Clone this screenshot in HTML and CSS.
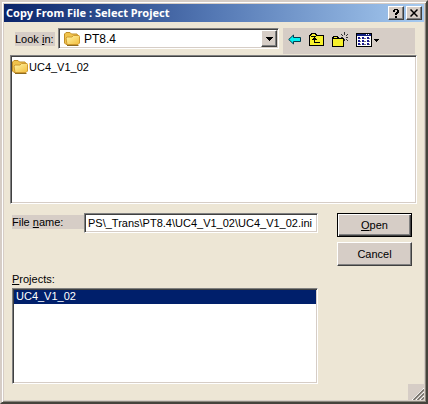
FILE: index.html
```html
<!DOCTYPE html>
<html lang="en">
<head>
<meta charset="utf-8">
<title>Copy From File : Select Project</title>
<link rel="stylesheet" href="styles.css">
</head>
<body>
<svg class="defs" width="0" height="0" aria-hidden="true">
  <defs>
    <linearGradient id="gold" x1="0" y1="0" x2="1" y2="1">
      <stop offset="0" stop-color="#fff6a8"/>
      <stop offset="1" stop-color="#f3bd3c"/>
    </linearGradient>
    <symbol id="folder" viewBox="0 0 16 14">
      <path d="M.5 11V2L2 .5h4L7.500 2H13l.5 1v8l-1 1.500H2z" fill="#f0c34c" stroke="#c08e28"/>
      <path d="M3 12.500L2 6l1-1h5l1.500-1.500H15l.5 1V11L14 12.500z" fill="url(#gold)" stroke="#cf9a30"/>
      <path d="M3 13.500h11.500" stroke="#8c6a20"/>
    </symbol>
  </defs>
</svg>
<form class="window" onsubmit="return false">
  <header class="titlebar">
    <h1 class="title">Copy From File : Select Project</h1>
    <button class="caption-button" type="button" aria-label="Help">
      <svg width="7" height="9" viewBox="0 0 7 9" shape-rendering="crispEdges"><path d="M1 0h4v1h1v3H5v1H4v1H2V4h1V3h1V1H2v2H0V1h1zM2 7h2v2H2z"/></svg>
    </button>
    <button class="caption-button close" type="button" aria-label="Close">
      <svg width="8" height="8" viewBox="0 0 8 8"><path d="M0.500 0.500l7 7M7.500 0.500l-7 7" stroke="#000" stroke-width="1.500"/></svg>
    </button>
  </header>
  <main class="content">
    <div class="look-row">
      <label class="label look-label" for="look">Look <u>i</u>n:</label>
      <div class="combo">
        <select id="look"><option>PT8.4</option></select>
        <svg class="combo-icon" width="16" height="14"><use href="#folder"/></svg>
        <span class="combo-arrow"><svg width="7" height="4" viewBox="0 0 7 4" shape-rendering="crispEdges"><path d="M0 0h7v1H6v1H5v1H4v1H3V3H2V2H1V1H0z"/></svg></span>
      </div>
      <div class="toolbar">
        <button class="tool" type="button" aria-label="Back">
          <svg width="13" height="11" viewBox="0 0 13 11"><path d="M.7 5.500L5.500 1v2.500h7v4h-7V10z" fill="#00f0f0" stroke="#003c50"/></svg>
        </button>
        <button class="tool" type="button" aria-label="Up one level">
          <svg width="15" height="13" viewBox="0 0 15 13" shape-rendering="crispEdges"><path d="M.5 12.500V2.500h1v-1h1v-1h4v1h1v1h7v10z" fill="#f7f12c" stroke="#000"/><path d="M2 3h5" stroke="#000"/><path d="M5 4h1v1h1v1h1v1H6v2h5v1H5V7H3V6h1V5h1z"/></svg>
        </button>
        <button class="tool" type="button" aria-label="New folder">
          <svg width="16" height="15" viewBox="0 0 16 15" shape-rendering="crispEdges"><path d="M.5 14.500v-9h1v-1h4v1h1v1h5v8z" fill="#f7f12c" stroke="#000"/><path d="M1 6.500h6" stroke="#000"/><path d="M12 0h1v3h-1zM12 7h1v2h-1zM9 5h2v1H9zM14 5h2v1h-2zM9 2h1v1H9zM10 3h1v1h-1zM14 3h1v1h-1zM15 2h1v1h-1zM14 7h1v1h-1zM15 8h1v1h-1z" fill="#333"/></svg>
        </button>
        <button class="tool" type="button" aria-label="View menu">
          <svg width="24" height="14" viewBox="0 0 24 14" shape-rendering="crispEdges"><path d="M.5.5h15v13H.5z" fill="#fff" stroke="#000"/><path d="M1 1h14v2H1z" fill="#102080"/><path d="M10 1h1v1h-1zM12 1h1v1h-1z" fill="#fff"/><path d="M2 4h2v2H2zM6 4h2v2H6zM11 4h2v2h-2zM2 7h2v2H2zM6 7h2v2H6zM11 7h2v2h-2zM2 10h2v2H2zM6 10h2v2H6zM11 10h2v2h-2z" fill="#1c1c90"/><path d="M4 5h1v1H4zM8 5h2v1H8zM13 5h1v1h-1zM4 8h1v1H4zM8 8h2v1H8zM13 8h1v1h-1zM4 11h1v1H4zM8 11h2v1H8zM13 11h1v1h-1z" fill="#777"/><path d="M18 6h5v1h-1v1h-1v1h-1V8h-1V7h-1z"/></svg>
        </button>
      </div>
    </div>
    <ul class="files">
      <li class="file"><svg width="16" height="14" aria-hidden="true"><use href="#folder"/></svg><span>UC4_V1_02</span></li>
    </ul>
    <div class="lower">
      <div class="fields">
        <div class="name-row">
          <label class="label name-label" for="name">File <u>n</u>ame:</label>
          <input id="name" class="name-input" type="text" value="PS\_Trans\PT8.4\UC4_V1_02\UC4_V1_02.ini">
        </div>
        <label class="projects-label" for="projects"><u>P</u>rojects:</label>
        <select id="projects" class="projects" size="5"><option selected>UC4_V1_02</option></select>
      </div>
      <div class="actions">
        <button class="action default" type="submit"><span><u>O</u>pen</span></button>
        <button class="action" type="button"><span>Cancel</span></button>
      </div>
    </div>
  </main>
  <svg class="grip" width="16" height="16" viewBox="0 0 16 16" aria-hidden="true"><path d="M4 16L16 4M8 16l8-8M12 16l4-4" stroke="#fff"/><path d="M5.500 16L16 5.500M9.500 16l6.500-6.500M13.500 16l2.500-2.500" stroke="#77736c" stroke-width="1.600"/></svg>
</form>
</body>
</html>
```
FILE: styles.css
```css
* {
  box-sizing: border-box;
}

body {
  margin: 0;
  font: 11px/14px "Liberation Sans", Arial, sans-serif;
  color: #000;
}

button,
input,
select {
  font: inherit;
  color: inherit;
  border-radius: 0;
  margin: 0;
}

button:focus,
input:focus,
select:focus {
  outline: none;
}

.defs {
  position: absolute;
}

.window {
  position: relative;
  min-height: 100vh;
  padding: 2px;
  background: #ede6d5;
  border: 2px solid;
  border-color: #d6cdc6 #45433c #45433c #d6cdc6;
  box-shadow: inset 1px 1px #fff, inset -1px -1px #8a867c, inset 2px 2px #d6cdc6, inset -2px -2px #d6cdc6;
}

.titlebar {
  display: flex;
  align-items: center;
  height: 18px;
  padding: 0 2px;
  background: linear-gradient(90deg, #0a246a, #5478b4 50%, #a6caf0);
}

.title {
  flex: 1;
  margin: 0;
  font: bold 11px/16px "Noto Sans", Tahoma, sans-serif;
  color: #fff;
  white-space: nowrap;
}

.caption-button {
  display: flex;
  align-items: center;
  justify-content: center;
  width: 16px;
  height: 14px;
  padding: 0;
  background: #d6cdc6;
  border: 1px solid;
  border-color: #fff #404040 #404040 #fff;
  box-shadow: inset -1px -1px #808080;
}

.close {
  margin-left: 2px;
}

.content {
  padding: 6px 7px 15px 6px;
}

.look-row {
  display: flex;
  align-items: flex-start;
  padding: 0 2px 0 5px;
}

.label {
  background: #d6cdc6;
}

.look-label {
  width: 40px;
  margin: 4px 3px 0 0;
  white-space: nowrap;
}

.combo {
  position: relative;
  flex: 1;
}

.combo select,
.files,
.name-input,
.projects {
  background: #fff;
  border: 1px solid;
  border-color: #808080 #fff #fff #808080;
  box-shadow: inset 1px 1px #404040, inset -1px -1px #d6cdc6;
}

.combo select {
  display: block;
  width: 100%;
  height: 21px;
  padding: 0 20px 0 25px;
  appearance: none;
  font-size: 12px;
}

.combo-icon {
  position: absolute;
  left: 6px;
  top: 4px;
  pointer-events: none;
}

.combo-arrow {
  position: absolute;
  top: 2px;
  right: 2px;
  bottom: 2px;
  width: 16px;
  display: flex;
  align-items: center;
  justify-content: center;
  background: #d6cdc6;
  border: 1px solid;
  border-color: #fff #404040 #404040 #fff;
  box-shadow: inset -1px -1px #808080;
  pointer-events: none;
}

.toolbar {
  display: flex;
  align-items: center;
  gap: 8px;
  width: 132px;
  height: 26px;
  margin-left: 4px;
  padding: 0 5px 3px;
  background: #d6cdc6;
}

.tool {
  display: flex;
  padding: 0;
  background: none;
  border: 0;
}

.files {
  height: 149px;
  margin: 1px 0 0;
  padding: 3px 1px;
  list-style: none;
}

.file {
  display: flex;
  align-items: center;
  gap: 1px;
  height: 16px;
}

.lower {
  display: flex;
  gap: 19px;
  padding: 9px 5px 0 2px;
}

.fields {
  flex: 1;
  min-width: 0;
}

.name-row {
  display: flex;
  align-items: flex-start;
}

.name-label {
  width: 72px;
  margin-top: 2px;
}

.name-input {
  flex: 1;
  min-width: 0;
  height: 20px;
  padding: 0 2px 0 3px;
}

.projects-label {
  display: block;
  margin-top: 39px;
}

.projects {
  display: block;
  width: 100%;
  height: 96px;
  margin-top: 2px;
  padding: 1px;
  overflow: hidden;
}

.projects option {
  min-height: 14px;
  padding: 0 2px;
  line-height: 14px;
}

.projects option:checked {
  color: #fff;
  background: #001f6b linear-gradient(#001f6b, #001f6b);
}

.actions {
  display: flex;
  flex-direction: column;
  gap: 5px;
  width: 75px;
}

.action {
  height: 24px;
  padding: 0;
  background: #d6cdc6;
  border: 1px solid;
  border-color: #fff #404040 #404040 #fff;
  box-shadow: inset -1px -1px #808080;
}

.default {
  border-color: #000;
  box-shadow: inset 1px 1px #fff, inset -1px -1px #404040, inset -2px -2px #808080;
}

.grip {
  position: absolute;
  right: 2px;
  bottom: 2px;
  background: #d6cdc6;
}
```
